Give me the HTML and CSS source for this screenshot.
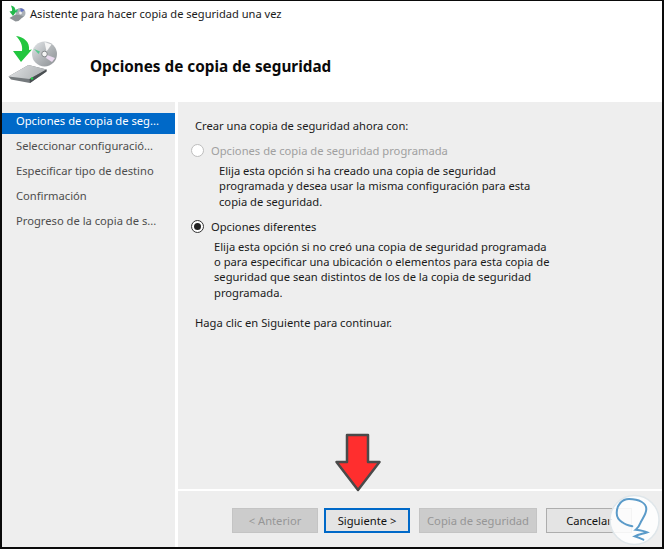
FILE: index.html
```html
<!DOCTYPE html>
<html lang="es">
<head>
  <meta charset="UTF-8">
  <title>Asistente para hacer copia de seguridad una vez</title>
  <link rel="stylesheet" href="styles.css">
</head>
<body>
  <div class="wizard">
    <div class="title-bar">
      <svg class="title-icon" width="17" height="17" viewBox="0 0 17 17">
        <circle cx="11.500" cy="8" r="5" fill="#aab0b6"/>
        <path d="M11.500 3l4 2-4 3z" fill="#5f6fc4"/>
        <path d="M8 8l-2-3 3-1z" fill="#3fbf7f"/>
        <circle cx="11.500" cy="8" r="1.400" fill="#f4f4f4"/>
        <path d="M0.500 13l6-3.500 6 1 2 1-5 4.500-3 0.500z" fill="#8d9296"/>
        <path d="M2 0.500c3 0.500 4.500 2.500 4.500 5.500l1.500-0.500-4 5.500-3.500-4.500 2.500-0.500c0.500-2-0.500-3.500-1-5.500z" fill="#22b84a"/>
      </svg>
      <span>Asistente para hacer copia de seguridad una vez</span>
    </div>

    <div class="wizard-header">
      <svg class="header-icon" width="52" height="52" viewBox="0 0 52 52">
        <defs>
          <linearGradient id="disc" x1="0" y1="0" x2="1" y2="1">
            <stop offset="0" stop-color="#e4e7ea"/>
            <stop offset="0.5" stop-color="#b3b7ba"/>
            <stop offset="1" stop-color="#8a8f92"/>
          </linearGradient>
          <linearGradient id="drive" x1="0" y1="0" x2="1" y2="0.300">
            <stop offset="0" stop-color="#e2e4e6"/>
            <stop offset="1" stop-color="#b0b4b6"/>
          </linearGradient>
        </defs>
        <circle cx="36.500" cy="20" r="12.500" fill="url(#disc)"/>
        <path d="M36.500 8l7 2.500-5 7z" fill="#f6f6f6"/>
        <path d="M26 15l6 2.500-1.500 2.500z" fill="#57c98d"/>
        <path d="M47 24l-8-3-1 3 6 4z" fill="#e9d9ee"/>
        <circle cx="36.500" cy="20" r="2.800" fill="#f5f5f5" stroke="#85898c"/>
        <path d="M0.500 42.500L20.500 31l18 4.500v2L22 49l-19-3.500z" fill="#74797c"/>
        <path d="M0.500 42.500L20.500 31l18 4.500-17 9.500z" fill="url(#drive)"/>
        <path d="M21.500 45l17-9.500v2L22 49z" fill="#4a4f52"/>
        <circle cx="24" cy="44.500" r="1.300" fill="#24d04a"/>
        <path d="M8 2c8 1 14 6 13 14l3-0.500-11 12.500-8-11 9 0c1-6-2-11-6-15z" fill="#22c63f"/>
      </svg>
      <h1 class="wizard-title">Opciones de copia de seguridad</h1>
    </div>

    <div class="wizard-body">
      <ul class="steps">
        <li class="step active">Opciones de copia de seg...</li>
        <li class="step">Seleccionar configuració...</li>
        <li class="step">Especificar tipo de destino</li>
        <li class="step">Confirmación</li>
        <li class="step">Progreso de la copia de s...</li>
      </ul>

      <div class="main">
        <div class="content">
          <p class="intro">Crear una copia de seguridad ahora con:</p>

          <div class="option disabled">
            <span class="radio"></span>
            <span>Opciones de copia de seguridad programada</span>
          </div>
          <p class="option-text first">Elija esta opción si ha creado una copia de seguridad<br>programada y desea usar la misma configuración para esta<br>copia de seguridad.</p>

          <div class="option">
            <span class="radio checked"></span>
            <span>Opciones diferentes</span>
          </div>
          <p class="option-text">Elija esta opción si no creó una copia de seguridad programada<br>o para especificar una ubicación o elementos para esta copia de<br>seguridad que sean distintos de los de la copia de seguridad<br>programada.</p>

          <p class="hint">Haga clic en Siguiente para continuar.</p>
        </div>

        <div class="footer">
          <button class="btn btn-disabled btn-back">&lt; Anterior</button>
          <button class="btn btn-default btn-next">Siguiente &gt;</button>
          <button class="btn btn-disabled btn-backup">Copia de seguridad</button>
          <button class="btn">Cancelar</button>
        </div>
      </div>
    </div>

    <svg class="arrow" width="48" height="62" viewBox="0 0 48 62">
      <path d="M13 3h21v27h11.500L24 58 2.500 30H13z" fill="#ff2e2e" stroke="#4a4a4a" stroke-width="2.500" stroke-linejoin="round"/>
    </svg>

    <svg class="watermark" width="52" height="52" viewBox="0 0 52 52">
      <circle cx="26.500" cy="26" r="24.500" fill="#fff" fill-opacity="0.86" stroke="#dfe6ea" stroke-width="1.500"/>
      <path d="M24.300 32.300C20 31.500 17 30.500 14.300 28.300 10.500 26 8.700 23 8.700 19 8.700 11 14 5 21 5c10 0 17.300 4 17.300 10 0 5-3.500 9-5.600 13.300-1 2.500-2.500 5.500-5 7.400 4 0.500 8 1 11.600 2.600-4 1.500-8.500 2-12.600 4 3 1 6 2 8.600 3.400" fill="none" stroke="#5b9bc9" stroke-width="2" stroke-linecap="round"/>
    </svg>
  </div>
</body>
</html>
```

FILE: styles.css
```css
* {
  margin: 0;
  padding: 0;
  box-sizing: border-box;
}

html, body {
  height: 100%;
}

body {
  font-family: "Noto Sans", "Open Sans", sans-serif;
  font-size: 11.2px;
  color: #1a1a1a;
  background: #fff;
  overflow: hidden;
}

.wizard {
  position: relative;
  height: 549px;
  display: flex;
  flex-direction: column;
  background: #fff;
  border-style: solid;
  border-color: #0a0a0a;
  border-width: 1px 2px 2px 2px;
}

/* Title bar */
.title-bar {
  display: flex;
  align-items: center;
  gap: 4px;
  height: 24px;
  padding-left: 7px;
  font-size: 11.1px;
}

/* Header */
.wizard-header {
  display: flex;
  align-items: flex-start;
  height: 77px;
  padding: 9px 0 0 6px;
}

.header-icon {
  margin-right: 30px;
}

.wizard-title {
  align-self: center;
  margin-bottom: 4px;
  font-size: 15.3px;
  font-weight: 700;
  color: #0a0a0a;
}

/* Body */
.wizard-body {
  flex: 1;
  display: flex;
  gap: 3px;
  min-height: 0;
}

.steps {
  width: 173px;
  list-style: none;
  background: #eeeeee;
  padding-top: 11px;
}

.step {
  height: 25px;
  line-height: 20px;
  padding-left: 14px;
  color: #4d4d4d;
  white-space: nowrap;
}

.step.active {
  height: 21px;
  line-height: 15px;
  margin-bottom: 2px;
  background: #0069c8;
  color: #fff;
}

.main {
  flex: 1;
  display: flex;
  flex-direction: column;
  background: #eeeeee;
}

.content {
  flex: 1;
  padding: 15px 0 0 17px;
  border-bottom: 2px solid #fff;
}

.intro {
  margin-bottom: 8px;
  line-height: 17px;
}

.option {
  display: flex;
  align-items: center;
  gap: 7px;
  height: 17px;
  margin-left: -4px;
  margin-bottom: 4px;
}

.option.disabled {
  color: #a0a0a0;
}

.radio {
  width: 13px;
  height: 13px;
  border: 1px solid #333;
  border-radius: 50%;
  background: #fff;
  display: flex;
  align-items: center;
  justify-content: center;
}

.option.disabled .radio {
  border-color: #bdbdbd;
}

.radio.checked::after {
  content: "";
  width: 7px;
  height: 7px;
  border-radius: 50%;
  background: #222;
}

.option-text {
  margin-left: 19px;
  margin-bottom: 10px;
  line-height: 15.3px;
}

.option-text.first {
  margin-left: 24px;
  margin-bottom: 9px;
}

.hint {
  margin-top: 14px;
  line-height: 17px;
}

/* Buttons */
.footer {
  display: flex;
  align-items: flex-start;
  height: 56px;
  padding: 17px 0 0 54px;
}

.btn {
  width: 86px;
  height: 25px;
  font: inherit;
  color: #111;
  background: #e4e4e4;
  border: 1px solid #adadad;
}

.btn-back {
  margin-right: 6px;
}

.btn-next {
  margin-right: 9px;
}

.btn-backup {
  width: 118px;
  margin-right: 9px;
}

.btn-disabled {
  background: #cccccc;
  border-color: #c4c4c4;
  color: #969696;
}

.btn-default {
  border: 2px solid #0069c8;
}

/* Overlays */
.arrow {
  position: absolute;
  left: 332px;
  top: 431px;
}

.watermark {
  position: absolute;
  left: 606px;
  top: 493px;
}
```
